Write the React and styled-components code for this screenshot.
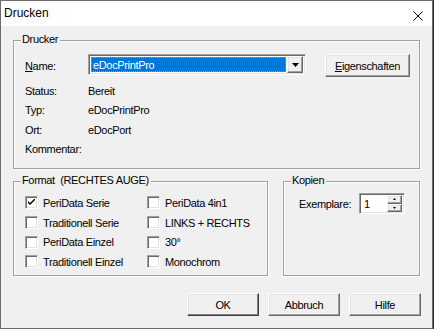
import React from "react";
import styled, { createGlobalStyle, css } from "styled-components";

const Global = createGlobalStyle`
  html, body { margin: 0; padding: 0; background: #2a2a2a; }
  * { box-sizing: border-box; }
  body {
    font-family: "Liberation Sans", Arial, sans-serif;
    font-size: 11px;
    letter-spacing: -0.35px;
    color: #000;
  }
`;

const Window = styled.div`
  width: 433px;
  height: 329px;
  border: 1px solid #6d6d6d;
  background: #f0f0f0;
  display: flex;
  flex-direction: column;
`;

const TitleBar = styled.div`
  height: 25px;
  background: #fff;
  display: flex;
  align-items: center;
  justify-content: space-between;
  padding: 0 9px 0 3px;
  font-size: 12px;
  letter-spacing: 0;
`;

const Title = styled.span`
  position: relative;
  top: -1px;
`;

const CloseIcon = styled.svg`
  width: 10px;
  height: 10px;
  margin-top: 4px;
`;

const Body = styled.div`
  flex: 1;
  display: flex;
  flex-direction: column;
  padding: 14px 12px 0 12px;
`;

const Group = styled.div`
  position: relative;
  width: ${(p) => p.$w}px;
  height: ${(p) => p.$h}px;
  border: 1px solid #a0a0a0;
  box-shadow: 1px 1px 0 #fff, inset 1px 1px 0 #fff;
  padding: ${(p) => p.$pad};
`;

const Caption = styled.span`
  position: absolute;
  left: 7px;
  top: -8px;
  line-height: 13px;
  padding: 0 2px 0 1px;
  background: #f0f0f0;
  white-space: pre;
`;

const NameRow = styled.div`
  display: flex;
  align-items: center;
  height: 23px;
`;

const Label = styled.span`
  width: ${(p) => p.$w || 63}px;
  flex: none;
`;

const U = styled.span`
  text-decoration: underline;
  text-underline-offset: 1px;
`;

const sunken = css`
  border: 1px solid;
  border-color: #a0a0a0 #fff #fff #a0a0a0;
  box-shadow: inset 1px 1px 0 #696969, inset -1px -1px 0 #e3e3e3;
`;

const raised = css`
  border: 1px solid;
  border-color: #fff #696969 #696969 #fff;
  box-shadow: inset -1px -1px 0 #a0a0a0, inset 1px 1px 0 #e3e3e3;
  background: #f0f0f0;
`;

const Combo = styled.div`
  ${sunken};
  width: 218px;
  height: 21px;
  background: #fff;
  display: flex;
  align-items: center;
  padding: 2px;
  gap: 1px;
  align-self: flex-start;
`;

const Selection = styled.div`
  flex: 1;
  height: 15px;
  background: #0078d7;
  color: #fff;
  border: 1px dotted #e8901c;
  display: flex;
  align-items: center;
  padding-left: 1px;
`;

const DropBtn = styled.div`
  ${raised};
  width: 16px;
  height: 17px;
  display: flex;
  align-items: center;
  justify-content: center;
`;

const Button = styled.div`
  ${raised};
  width: ${(p) => p.$w}px;
  height: 23px;
  display: flex;
  align-items: center;
  justify-content: center;
  ${(p) =>
    p.$default &&
    css`
      border-color: #fff #404040 #404040 #fff;
      box-shadow: inset -1px -1px 0 #808080, inset 1px 1px 0 #e3e3e3;
    `}
`;

const PropsButton = styled(Button)`
  margin-left: 19px;
`;

const InfoList = styled.div`
  margin-top: 4px;
  display: grid;
  grid-auto-rows: 19.5px;
  align-items: center;
`;

const InfoRow = styled.div`
  display: flex;
  align-items: center;
`;

const LowerRow = styled.div`
  display: flex;
  gap: 15px;
  margin-top: 12px;
`;

const CheckGrid = styled.div`
  display: grid;
  grid-template-columns: 122px 110px;
  grid-auto-flow: column;
  grid-template-rows: repeat(4, 19.7px);
  align-items: center;
`;

const CheckItem = styled.label`
  display: flex;
  align-items: center;
  gap: 5px;
  white-space: nowrap;
`;

const Box = styled.span`
  ${sunken};
  width: 13px;
  height: 13px;
  background: #fff;
  display: flex;
  align-items: center;
  justify-content: center;
  flex: none;
`;

const CopiesRow = styled.div`
  display: flex;
  align-items: center;
`;

const Spin = styled.div`
  ${sunken};
  width: 46px;
  height: 21px;
  background: #fff;
  display: flex;
  align-items: center;
  justify-content: space-between;
  padding: 2px 2px 2px 4px;
`;

const SpinBtns = styled.div`
  display: flex;
  flex-direction: column;
  height: 17px;
  width: 15px;
`;

const SpinBtn = styled.div`
  ${raised};
  flex: 1;
  display: flex;
  align-items: center;
  justify-content: center;
`;

const ButtonRow = styled.div`
  display: flex;
  justify-content: flex-end;
  gap: 9px;
  margin-top: 17px;
  margin-right: -1px;
`;

const Check = ({ checked, children }) => (
  <CheckItem>
    <Box>
      {checked && (
        <svg width="7" height="7" viewBox="0 0 7 7">
          <path d="M0 2 L0 4 L2 6 L7 1 L7 -1 L2 4 Z" fill="#000" />
        </svg>
      )}
    </Box>
    {children}
  </CheckItem>
);

const Tri = ({ w, h, up }) => (
  <svg width={w} height={h} viewBox={`0 0 ${w} ${h}`}>
    <polygon
      points={up ? `0,${h} ${w},${h} ${w / 2},0` : `0,0 ${w},0 ${w / 2},${h}`}
      fill="#000"
    />
  </svg>
);

export default function App() {
  return (
    <>
      <Global />
      <Window>
        <TitleBar>
          <Title>Drucken</Title>
          <CloseIcon viewBox="0 0 10 10">
            <path d="M0.5 0.5 L9.5 9.5 M9.5 0.5 L0.5 9.5" stroke="#000" strokeWidth="1" />
          </CloseIcon>
        </TitleBar>
        <Body>
          <Group $w={407} $h={129} $pad="13px 0 0 11px">
            <Caption>Drucker</Caption>
            <NameRow>
              <Label>
                <U>N</U>ame:
              </Label>
              <Combo>
                <Selection>eDocPrintPro</Selection>
                <DropBtn>
                  <Tri w={7} h={4} />
                </DropBtn>
              </Combo>
              <PropsButton $w={85}>
                <span>
                  <U>E</U>igenschaften
                </span>
              </PropsButton>
            </NameRow>
            <InfoList>
              <InfoRow>
                <Label>Status:</Label>Bereit
              </InfoRow>
              <InfoRow>
                <Label>Typ:</Label>eDocPrintPro
              </InfoRow>
              <InfoRow>
                <Label>Ort:</Label>eDocPort
              </InfoRow>
              <InfoRow>
                <Label>Kommentar:</Label>
              </InfoRow>
            </InfoList>
          </Group>
          <LowerRow>
            <Group $w={255} $h={95} $pad="11px 0 0 11px">
              <Caption>Format  (RECHTES AUGE)</Caption>
              <CheckGrid>
                <Check checked>PeriData Serie</Check>
                <Check>Traditionell Serie</Check>
                <Check>PeriData Einzel</Check>
                <Check>Traditionell Einzel</Check>
                <Check>PeriData 4in1</Check>
                <Check>LINKS + RECHTS</Check>
                <Check>30°</Check>
                <Check>Monochrom</Check>
              </CheckGrid>
            </Group>
            <Group $w={137} $h={95} $pad="11px 0 0 15px">
              <Caption>Kopien</Caption>
              <CopiesRow>
                <Label $w={60}>Exemplare:</Label>
                <Spin>
                  <span>1</span>
                  <SpinBtns>
                    <SpinBtn>
                      <Tri w={3} h={2} up />
                    </SpinBtn>
                    <SpinBtn>
                      <Tri w={3} h={2} />
                    </SpinBtn>
                  </SpinBtns>
                </Spin>
              </CopiesRow>
            </Group>
          </LowerRow>
          <ButtonRow>
            <Button $w={72} $default>OK</Button>
            <Button $w={72}>Abbruch</Button>
            <Button $w={72}>Hilfe</Button>
          </ButtonRow>
        </Body>
      </Window>
    </>
  );
}
